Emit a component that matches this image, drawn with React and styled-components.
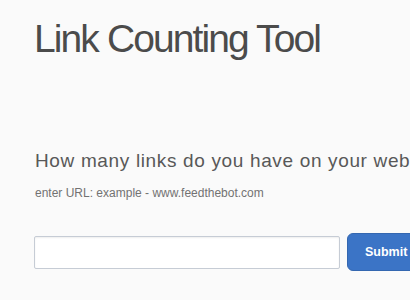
import React from "react";
import styled, { createGlobalStyle } from "styled-components";

const GlobalStyle = createGlobalStyle`
  html, body {
    margin: 0;
    padding: 0;
    background: #fafafa;
    overflow: hidden;
  }
  body {
    font-family: "Liberation Sans", Arial, sans-serif;
  }
`;

const Page = styled.div`
  width: 620px;
  padding: 19px 0 0 34px;
  box-sizing: border-box;
  min-height: 300px;
`;

const Title = styled.h1`
  margin: 0;
  font-size: 39px;
  line-height: 1;
  font-weight: 400;
  letter-spacing: -1.9px;
  color: #4b4b4b;
`;

const Question = styled.h2`
  margin: 93px 0 0 1px;
  font-size: 19px;
  line-height: 1;
  font-weight: 400;
  letter-spacing: 0.65px;
  color: #585858;
  white-space: nowrap;
`;

const Hint = styled.p`
  margin: 17px 0 0 1px;
  font-size: 12px;
  line-height: 1;
  color: #727272;
  white-space: nowrap;
`;

const Form = styled.form`
  display: flex;
  align-items: center;
  gap: 7px;
  margin-top: 34px;
`;

const UrlInput = styled.input`
  width: 306px;
  height: 33px;
  box-sizing: border-box;
  border: 1px solid #c6ccd5;
  border-radius: 2px;
  background: #fff;
  box-shadow: inset 0 1px 2px rgba(0, 0, 0, 0.07);
  padding: 0 8px;
  font-family: inherit;
  font-size: 14px;
  outline: none;
`;

const SubmitButton = styled.button`
  height: 38px;
  padding: 0 17px;
  border: 1px solid #3467b0;
  border-radius: 6px;
  background: #3b74c6;
  color: #fff;
  font-family: inherit;
  font-size: 12.5px;
  font-weight: 700;
  cursor: pointer;
`;

const App = () => {
  return (
    <>
      <GlobalStyle />
      <Page>
        <Title>Link Counting Tool</Title>
        <Question>How many links do you have on your website?</Question>
        <Hint>enter URL: example - www.feedthebot.com</Hint>
        <Form onSubmit={(e) => e.preventDefault()}>
          <UrlInput type="text" />
          <SubmitButton type="submit">Submit</SubmitButton>
        </Form>
      </Page>
    </>
  );
};

export default App;
